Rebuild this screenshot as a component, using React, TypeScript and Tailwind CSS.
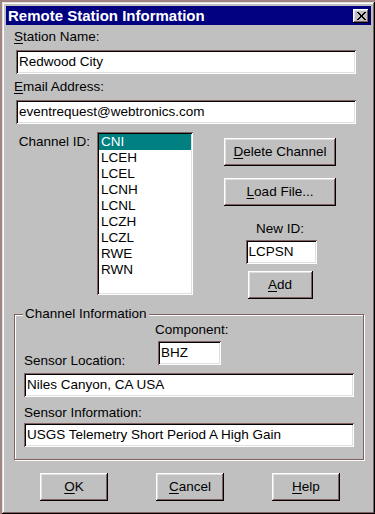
import type { ReactNode } from 'react'

const raised =
  'shadow-[inset_-1px_-1px_#000,inset_1px_1px_#fff,inset_-2px_-2px_#806060,inset_2px_2px_#dfdfdf]'
const sunken =
  'shadow-[inset_1px_1px_#806060,inset_-1px_-1px_#fff,inset_2px_2px_#000,inset_-2px_-2px_#dfdfdf]'

const channels = ['CNI', 'LCEH', 'LCEL', 'LCNH', 'LCNL', 'LCZH', 'LCZL', 'RWE', 'RWN']

function Button({ children, className = '' }: { children: ReactNode; className?: string }) {
  return (
    <button className={`flex items-center justify-center bg-[#c0c0c0] h-[28px] text-black ${raised} ${className}`}>
      {children}
    </button>
  )
}

function Field({ value, className = '' }: { value: string; className?: string }) {
  return (
    <div className={`flex items-center bg-white h-[24px] pl-[3px] whitespace-nowrap overflow-hidden ${sunken} ${className}`}>
      {value}
    </div>
  )
}

function U({ children }: { children: ReactNode }) {
  return <span className="underline underline-offset-[2px]">{children}</span>
}

export default function App() {
  return (
    <div className="w-[375px] h-[514px] bg-[#a08484] pt-[2px] pl-[2px] overflow-hidden font-['Liberation_Sans',Arial,sans-serif] text-[13.5px] leading-[16px] text-black">
      <div className="w-[373px] h-[512px] bg-[#c0c0c0] p-[4px] shadow-[inset_-1px_-1px_#000,inset_1px_1px_#dfdfdf,inset_-2px_-2px_#806060,inset_2px_2px_#fff]">
        {/* title bar */}
        <div className="flex items-center justify-between h-[19px] bg-[#000080] pl-[2px] pr-[2px]">
          <span className="text-white font-bold text-[15px] leading-[19px]">Remote Station Information</span>
          <div className={`flex items-center justify-center w-[16px] h-[14px] bg-[#c0c0c0] ${raised}`}>
            <svg width="9" height="8" viewBox="0 0 9 8" shapeRendering="crispEdges">
              <path
                d="M0 0h2v1H0zM7 0h2v1H7zM1 1h2v1H1zM6 1h2v1H6zM2 2h2v1H2zM5 2h2v1H5zM3 3h3v2H3zM2 5h2v1H2zM5 5h2v1H5zM1 6h2v1H1zM6 6h2v1H6zM0 7h2v1H0zM7 7h2v1H7z"
                fill="#000"
              />
            </svg>
          </div>
        </div>

        <div className="pl-[8px]">
          <div className="mt-[4px]">
            <U>S</U>tation Name:
          </div>
          <Field value="Redwood City" className="mt-[5px] ml-[2px] w-[340px]" />
          <div className="mt-[5px]">
            <U>E</U>mail Address:
          </div>
          <Field value="eventrequest@webtronics.com" className="mt-[5px] ml-[2px] w-[340px]" />

          {/* channel row */}
          <div className="flex items-start mt-[8px]">
            <div className="w-[83px] text-right pr-[7px] mt-[2px]">Channel ID:</div>
            <div className={`w-[96px] h-[163px] bg-white p-[2px] ${sunken}`}>
              {channels.map((c, i) => (
                <div
                  key={c}
                  className={`h-[16px] pl-[2px] ${i === 0 ? 'bg-[#008080] text-white' : ''}`}
                >
                  {c}
                </div>
              ))}
            </div>
            <div className="ml-[31px] w-[112px] flex flex-col items-center">
              <Button className="mt-[6px] w-[112px]">
                <U>D</U>elete Channel
              </Button>
              <Button className="mt-[12px] w-[112px]">
                <U>L</U>oad File...
              </Button>
              <div className="mt-[15px]">New ID:</div>
              <Field value="LCPSN" className="mt-[3px] w-[71px] h-[23px] ml-[2px]" />
              <Button className="mt-[7px] w-[65px]">
                <U>A</U>dd
              </Button>
            </div>
          </div>

          {/* channel information group */}
          <div className="relative mt-[15px] w-[350px] h-[146px] border border-[#806060] shadow-[1px_1px_0_#fff,inset_1px_1px_0_#fff]">
            <span className="absolute left-[8px] top-[-9px] px-[2px] bg-[#c0c0c0]">Channel Information</span>
            <div className="mt-[7px] pl-[140px]">Component:</div>
            <div className="flex items-start mt-[3px] pl-[9px]">
              <div className="w-[134px] mt-[12px]">Sensor Location:</div>
              <Field value="BHZ" className="w-[63px] h-[23px]" />
            </div>
            <Field value="Niles Canyon, CA USA" className="mt-[4px] ml-[9px] w-[330px]" />
            <div className="mt-[8px] pl-[9px]">Sensor Information:</div>
            <Field value="USGS Telemetry Short Period A High Gain" className="mt-[2px] ml-[9px] w-[330px]" />
          </div>

          {/* dialog buttons */}
          <div className="flex mt-[13px] ml-[26px] gap-[48px]">
            <Button className="w-[68px]">
              <U>O</U>K
            </Button>
            <Button className="w-[68px]">
              <U>C</U>ancel
            </Button>
            <Button className="w-[68px]">
              <U>H</U>elp
            </Button>
          </div>
        </div>
      </div>
    </div>
  )
}
